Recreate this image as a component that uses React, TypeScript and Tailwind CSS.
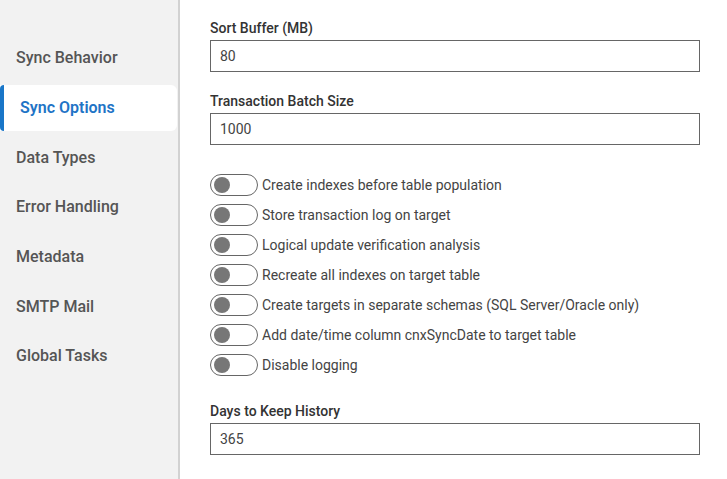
import React from 'react';

const navItems = [
  'Sync Behavior',
  'Sync Options',
  'Data Types',
  'Error Handling',
  'Metadata',
  'SMTP Mail',
  'Global Tasks',
];

const toggles = [
  'Create indexes before table population',
  'Store transaction log on target',
  'Logical update verification analysis',
  'Recreate all indexes on target table',
  'Create targets in separate schemas (SQL Server/Oracle only)',
  'Add date/time column cnxSyncDate to target table',
  'Disable logging',
];

function Field({ label, value, className }: { label: string; value: string; className?: string }) {
  return (
    <div className={className}>
      <div className="text-[14px] leading-5 font-medium text-[#333] mb-[2px]">{label}</div>
      <div className="h-8 border border-[#666] bg-white flex items-center pl-[9px] text-[14px] text-[#444]">
        {value}
      </div>
    </div>
  );
}

function Toggle({ label }: { label: string }) {
  return (
    <div className="flex items-center h-[22px]">
      <div className="w-[48px] h-[22px] rounded-full border border-[#666] bg-white flex items-center pl-[3px]">
        <div className="w-4 h-4 rounded-full bg-[#777]" />
      </div>
      <span className="ml-1 text-[14px] text-[#444]">{label}</span>
    </div>
  );
}

export default function App() {
  const active = 'Sync Options';
  return (
    <div className="flex h-screen bg-white" style={{ fontFamily: 'Roboto, "Liberation Sans", sans-serif' }}>
      {/* Sidebar */}
      <aside className="w-[180px] shrink-0 bg-[#f2f2f2] border-r-2 border-[#d2d2d2] pt-[33px]">
        {navItems.map((item) =>
          item === active ? (
            <div key={item} className="h-[50px] py-[2px] pr-[1px]">
              <div className="h-full bg-white rounded-r-md flex items-center">
                <div className="w-1 h-full bg-[#1976c8] rounded-l-md" />
                <span className="pl-4 text-[16px] font-semibold text-[#1f74c6]">{item}</span>
              </div>
            </div>
          ) : (
            <div key={item} className="h-[49.7px] flex items-center pl-4 text-[16px] font-medium text-[#555]">
              {item}
            </div>
          )
        )}
      </aside>

      {/* Main */}
      <main className="flex-1 pl-[30px] pr-[27px] pt-[18px]">
        <Field label="Sort Buffer (MB)" value="80" />
        <Field label="Transaction Batch Size" value="1000" className="mt-[19px]" />

        <div className="mt-[29px] flex flex-col gap-2">
          {toggles.map((t) => (
            <Toggle key={t} label={t} />
          ))}
        </div>

        <Field label="Days to Keep History" value="365" className="mt-[25px]" />
      </main>
    </div>
  );
}
